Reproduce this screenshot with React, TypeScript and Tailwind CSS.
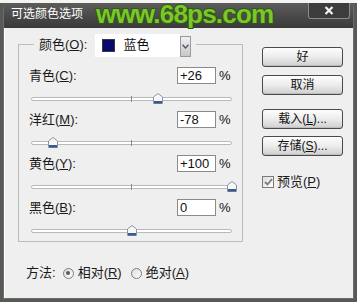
const cjk = { fontFamily: '"Liberation Sans", "Noto Sans CJK SC", sans-serif' };

const channels = [
  { name: "青色", key: "C", value: 26 },
  { name: "洋红", key: "M", value: -78 },
  { name: "黄色", key: "Y", value: 100 },
  { name: "黑色", key: "B", value: 0 },
];

const fmt = (v: number) => (v > 0 ? `+${v}` : `${v}`);

const Thumb = () => (
  <svg width="10" height="11" viewBox="0 0 10 11">
    <path d="M5 0.5 L9.5 4 L9.5 10.5 L0.5 10.5 L0.5 4 Z" fill="#f7f7f7" stroke="#8a96a8" />
    <rect x="1" y="8" width="8" height="2.5" fill="#3b5b8c" />
  </svg>
);

const Slider = ({ value }: { value: number }) => {
  const left = 12 + ((value + 100) / 200) * 201 - 5;
  return (
    <div className="relative h-[12px] mt-[9px]">
      <div className="absolute left-[12px] top-[4px] w-[201px] h-[4px] rounded-full border border-[#b9b9b9] bg-white" />
      <div className="absolute left-[112px] top-[3px] w-[1px] h-[6px] bg-[#8a8a8a]" />
      <div className="absolute top-[0px]" style={{ left }}>
        <Thumb />
      </div>
    </div>
  );
};

const Btn = ({ children }: { children: React.ReactNode }) => (
  <button className="w-[81px] h-[20px] rounded-[3px] border border-[#4a4a4a] bg-gradient-to-b from-[#fdfdfd] via-[#ececec] to-[#cfcfcf] text-[12px] text-[#111] leading-none flex items-center justify-center shadow-[inset_0_-1px_0_#bdbdbd]">
    {children}
  </button>
);

const Radio = ({ on }: { on?: boolean }) => (
  <span className="w-[11px] h-[11px] rounded-full border border-[#7a7a7a] bg-gradient-to-br from-[#dcdcdc] to-white flex items-center justify-center">
    {on && <span className="w-[4px] h-[4px] rounded-full bg-[#5a5a5a]" />}
  </span>
);

export default function App() {
  return (
    <div className="w-[357px] h-[302px] bg-[#565a54] overflow-hidden relative" style={cjk}>
      <div className="h-[3px] bg-[#f4f4f0]" />
      <div className="ml-[3px] w-[351px] h-[296px] flex flex-col border-l border-r border-b border-[#6c6c6c] rounded-t-[5px] overflow-hidden">
        <div className="h-[25px] shrink-0 bg-gradient-to-b from-[#5c5c5c] to-[#3a3a3a] flex items-start">
          <span className="text-white text-[12px] ml-[7px] mt-[5px] leading-none">可选颜色选项</span>
          <div className="ml-auto mr-[3px] w-[42px] h-[16px] bg-[#3c3c3c] border-l border-r border-b border-[#8c8c8c] rounded-b-[3px] flex items-center justify-center">
            <svg width="10" height="9" viewBox="0 0 10 9">
              <path d="M1.5 1 L8.5 8 M8.5 1 L1.5 8" stroke="#f2f2f2" strokeWidth="2.2" />
            </svg>
          </div>
        </div>
        <div className="flex-1 bg-[#efefef] flex pl-[13px] pt-[16px] border-l border-white">
          <div className="w-[225px] flex flex-col">
            <div className="relative h-[198px] border border-[#bcbcbc] pt-[22px] flex flex-col gap-[6px]">
              <div className="absolute left-[15px] top-[-11px] h-[22px] flex items-center bg-[#efefef] pl-[5px] pr-[5px]">
                <span className="text-[13px] text-[#1a1a1a]">
                  颜色(<span className="underline">O</span>):
                </span>
                <div className="ml-[8px] flex h-[23px]">
                  <div className="w-[85px] h-full bg-white flex items-center pl-[7px]">
                    <span className="w-[13px] h-[13px] bg-[#0a0a6e] border border-[#3a3a3a]" />
                    <span className="ml-[8px] text-[13px] text-[#111]">蓝色</span>
                  </div>
                  <div className="w-[11px] h-[21px] mt-[2px] border border-[#9a9a9a] bg-gradient-to-b from-[#f0f0f0] to-[#c8c8c8] flex items-center justify-center">
                    <svg width="7" height="5" viewBox="0 0 7 5">
                      <path d="M0.5 0.8 L3.5 4 L6.5 0.8" fill="none" stroke="#4a5a70" strokeWidth="1.4" />
                    </svg>
                  </div>
                </div>
              </div>
              {channels.map((c) => (
                <div key={c.key}>
                  <div className="flex items-center h-[17px] pl-[10px]">
                    <span className="flex-1 text-[13px] text-[#1a1a1a]">
                      {c.name}(<span className="underline">{c.key}</span>):
                    </span>
                    <div className="w-[39px] h-[17px] bg-white border border-[#8a8a8a] pl-[2px] text-[13px] leading-[15px] text-[#111]">
                      {fmt(c.value)}
                    </div>
                    <span className="ml-[3px] w-[12px] mr-[11px] text-[13px] text-[#111]">%</span>
                  </div>
                  <Slider value={c.value} />
                </div>
              ))}
            </div>
            <div className="mt-[25px] ml-[8px] flex items-center text-[13px] text-[#1a1a1a] h-[12px]">
              <span>方法:</span>
              <span className="ml-[7px]"><Radio on /></span>
              <span className="ml-[4px]">
                相对(<span className="underline">R</span>)
              </span>
              <span className="ml-[9px]"><Radio /></span>
              <span className="ml-[4px]">
                绝对(<span className="underline">A</span>)
              </span>
            </div>
          </div>
          <div className="ml-[19px] pt-[3px] w-[81px] flex flex-col">
            <Btn>好</Btn>
            <div className="mt-[8px]"><Btn>取消</Btn></div>
            <div className="mt-[14px]"><Btn>载入(<span className="underline">L</span>)...</Btn></div>
            <div className="mt-[7px]"><Btn>存储(<span className="underline">S</span>)...</Btn></div>
            <div className="mt-[16px] flex items-center">
              <span className="w-[12px] h-[12px] border border-[#7a7a7a] bg-gradient-to-br from-[#dedede] to-white flex items-center justify-center">
                <svg width="9" height="8" viewBox="0 0 9 8">
                  <path d="M1 4 L3.5 6.5 L8 1" fill="none" stroke="#7a7a7a" strokeWidth="1.8" />
                </svg>
              </span>
              <span className="ml-[3px] text-[13px] text-[#1a1a1a]">
                预览(<span className="underline">P</span>)
              </span>
            </div>
          </div>
        </div>
      </div>
      <div
        className="absolute left-[96px] top-[1px] text-[26px] font-bold text-[#7cc62a] leading-none tracking-[-0.8px]"
        style={{ fontFamily: '"Liberation Sans", sans-serif', WebkitTextStroke: "2px #2e5a12", paintOrder: "stroke fill" }}
      >
        www.68ps.com
      </div>
    </div>
  );
}
